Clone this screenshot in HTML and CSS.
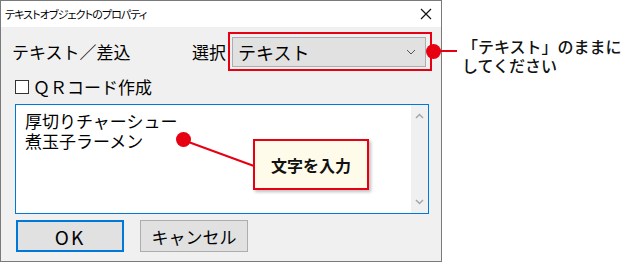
FILE: index.html
```html
<!DOCTYPE html>
<html lang="ja">
<head>
    <meta charset="UTF-8">
    <meta name="viewport" content="width=device-width, initial-scale=1.0">
    <title>テキストオブジェクトのプロパティ</title>
    <link rel="stylesheet" href="styles.css">
</head>
<body>
    <div class="stage">
        <div class="dialog">
            <div class="titlebar">
                <span class="title">テキストオブジェクトのプロパティ</span>
                <svg class="close" width="12" height="12" viewBox="0 0 12 12">
                    <path d="M1 1 L11 11 M11 1 L1 11" stroke="#111" stroke-width="1.2" fill="none"/>
                </svg>
            </div>
            <div class="content">
                <div class="row-source">
                    <span class="label">テキスト／差込</span>
                    <span class="select-label">選択</span>
                    <div class="highlight">
                        <div class="combo">
                            <span>テキスト</span>
                            <svg width="10" height="6" viewBox="0 0 10 6">
                                <path d="M1 1 L5 5 L9 1" stroke="#555" stroke-width="1" fill="none"/>
                            </svg>
                        </div>
                    </div>
                </div>
                <label class="row-qr">
                    <span class="checkbox"></span>
                    <span>ＱＲコード作成</span>
                </label>
                <div class="textbox">
                    <div class="text">厚切りチャーシュー<br>煮玉子ラーメン</div>
                    <div class="scrollbar">
                        <svg width="9" height="6" viewBox="0 0 9 6"><path d="M1 5 L4.5 1.5 L8 5" stroke="#a6a6a6" stroke-width="1.5" fill="none"/></svg>
                        <svg width="9" height="6" viewBox="0 0 9 6"><path d="M1 1 L4.5 4.5 L8 1" stroke="#a6a6a6" stroke-width="1.5" fill="none"/></svg>
                    </div>
                </div>
                <div class="buttons">
                    <button class="btn btn-default btn-ok">OK</button>
                    <button class="btn">キャンセル</button>
                </div>
            </div>
        </div>

        <!-- annotations -->
        <svg class="marks" width="624" height="263" viewBox="0 0 624 263">
            <line x1="433" y1="51" x2="457" y2="51" stroke="#e60012" stroke-width="2"/>
            <circle cx="433.5" cy="51.5" r="7.5" fill="#e60012"/>
            <line x1="183" y1="140" x2="254" y2="166" stroke="#e60012" stroke-width="2"/>
            <circle cx="183.5" cy="139.5" r="7.5" fill="#e60012"/>
        </svg>
        <div class="note note-right">「テキスト」のままに<br>してください</div>
        <div class="note-box">文字を入力</div>
    </div>
</body>
</html>
```

FILE: styles.css
```css
:root {
    --accent: #e60012;
    --win-blue: #0078d7;
    --face: #f0f0f0;
    --button: #e1e1e1;
}
body {
    margin: 0;
    background: #fff;
    font-family: "Noto Sans CJK JP", "Noto Sans", sans-serif;
    color: #000;
}
.stage {
    position: relative;
    width: 624px;
    height: 263px;
}
.dialog {
    width: 440px;
    height: 260px;
    border: 1px solid #7a7a7a;
    background: var(--face);
    display: flex;
    flex-direction: column;
}
.titlebar {
    height: 26px;
    background: #fff;
    display: flex;
    align-items: center;
    justify-content: space-between;
    padding: 0 9px 0 4px;
}
.title {
    font-size: 11px;
    font-feature-settings: "palt";
    letter-spacing: -0.9px;
}
.content {
    display: flex;
    flex-direction: column;
    padding: 5px 0 0 14px;
    font-size: 17px;
    line-height: 1;
}
.row-source {
    display: flex;
    align-items: center;
    margin-left: -3px;
}
.label {
    width: 180px;
}
.select-label {
    margin-right: 2px;
}
.highlight {
    border: 2px solid var(--accent);
    padding: 3px 4px 2px 2px;
}
.combo {
    width: 194px;
    height: 30px;
    border: 1px solid #adadad;
    background: var(--button);
    display: flex;
    align-items: center;
    justify-content: space-between;
    padding: 0 9px 0 5px;
    box-sizing: border-box;
    font-size: 18px;
}
.row-qr {
    display: flex;
    align-items: center;
    gap: 4px;
    margin-top: 7px;
    height: 17px;
}
.checkbox {
    width: 12px;
    height: 12px;
    border: 1px solid #333;
    background: #fff;
}
.textbox {
    margin-top: 9px;
    width: 412px;
    height: 108px;
    border: 1px solid var(--win-blue);
    background: #fff;
    display: flex;
    justify-content: space-between;
}
.text {
    padding: 6px 0 0 9px;
    font-size: 17px;
    line-height: 20px;
}
.scrollbar {
    width: 17px;
    background: var(--face);
    display: flex;
    flex-direction: column;
    align-items: center;
    justify-content: space-between;
    padding: 8px 0 8px;
}
.buttons {
    display: flex;
    gap: 16px;
    margin-top: 6px;
    margin-left: 1px;
}
.btn {
    width: 108px;
    height: 32px;
    border: 1px solid #adadad;
    background: var(--button);
    font-family: inherit;
    font-size: 17px;
    color: #000;
    padding: 0;
}
.btn-default {
    border: 2px solid var(--win-blue);
}
.btn-ok {
    font-size: 19px;
    letter-spacing: 2px;
}
.marks {
    position: absolute;
    left: 0;
    top: 0;
    pointer-events: none;
}
.note {
    position: absolute;
    font-size: 16px;
    font-weight: 500;
    line-height: 19px;
    color: #111;
}
.note-right {
    left: 462px;
    top: 37px;
}
.note-box {
    position: absolute;
    left: 253px;
    top: 139px;
    width: 112px;
    height: 47px;
    border: 2px solid var(--accent);
    background: #fffbea;
    box-shadow: 2px 2px 3px rgba(0, 0, 0, 0.25);
    display: flex;
    align-items: center;
    justify-content: center;
    font-size: 16px;
    font-weight: bold;
    color: #111;
}
```
